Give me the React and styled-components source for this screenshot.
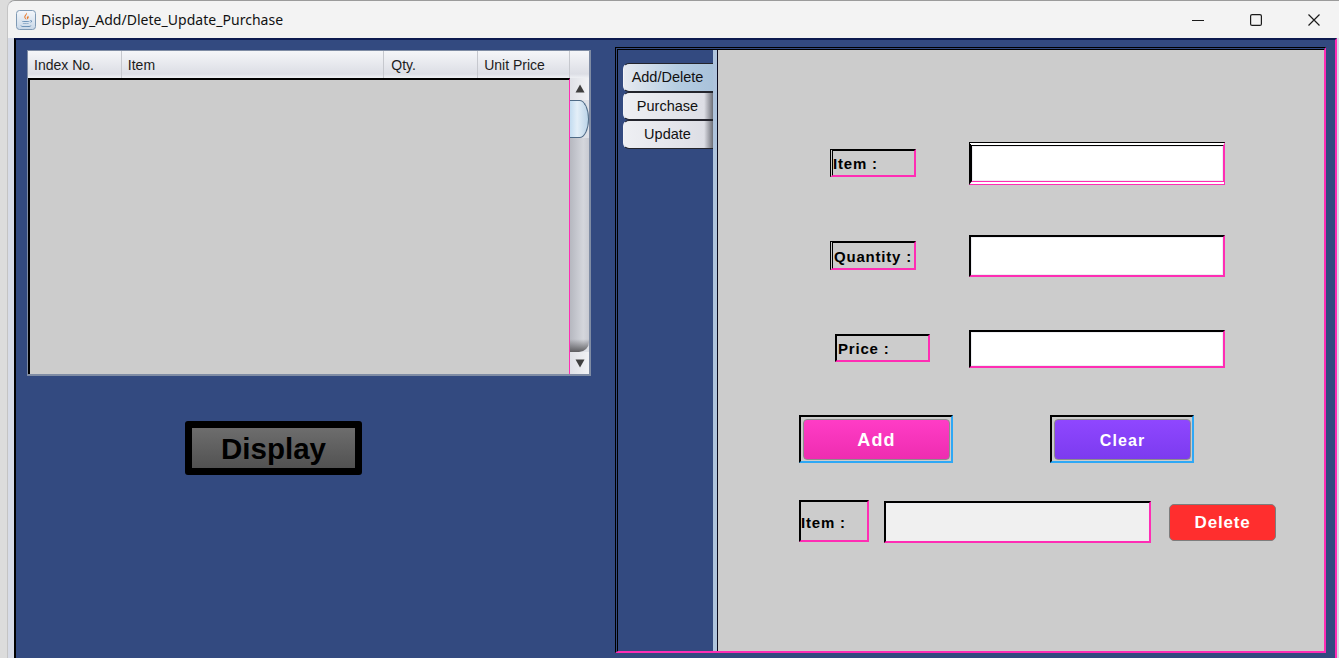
import React from 'react';
import styled, { createGlobalStyle } from 'styled-components';

const PINK = '#ff2db4';
const NAVY = '#334a80';

const Global = createGlobalStyle`
  html, body {
    margin: 0;
    height: 100%;
    overflow: hidden;
    background: #dcdcdc;
  }
`;

const JavaIcon = () => (
  <svg width="20" height="20" viewBox="0 0 20 20">
    <defs>
      <linearGradient id="tile" x1="0" y1="0" x2="0" y2="1">
        <stop offset="0" stopColor="#f4f7fb" />
        <stop offset="1" stopColor="#c9d8e8" />
      </linearGradient>
    </defs>
    <rect x="0.5" y="0.5" width="19" height="19" rx="3" fill="url(#tile)" stroke="#7f9ab5" />
    <path d="M10.5 2.5c1.6 2-1.8 3.2-1 5.2.3.8 1 1.3 1 2-1-.6-2.6-1.6-2.2-3.2.3-1.5 2.2-2.2 2.2-4zM12 5.5c-.2 1-1.3 1.4-1.2 2.4.1.6.5.9.5 1.6.8-.7 1.6-1.4 1.4-2.4-.1-.6-.5-1-.7-1.6z" fill="#e8792b" />
    <path d="M5.5 10.8c2.2.7 6.4.7 8.4 0-.4.6-1 .8-1.4.9-1.8.3-4 .3-5.6 0-.5-.1-1.1-.4-1.4-.9zM6.5 13c1.8.5 5 .5 6.6 0-.4.6-1 .7-1.6.8-1.2.2-2.4.2-3.6 0-.5-.1-1-.3-1.4-.8z" fill="#4f7ca8" />
    <path d="M4.2 15.2c2.4 1.3 8.8 1.3 11.4 0-.8 1.5-3 1.9-5.6 1.9-2.5 0-5-.4-5.8-1.9z" fill="#4f7ca8" />
    <path d="M14 10.5c1.6-.5 2.4.6 1.6 1.5-.4.5-1.2.8-2 1 .8-.5 1.4-.8 1.4-1.4 0-.5-.4-.8-1-1.1z" fill="#4f7ca8" />
  </svg>
);

const Arrow = ({ down }) => (
  <svg width="10" height="10" viewBox="0 0 10 10">
    <path d={down ? 'M0.5 1.5h9L5 9.5z' : 'M5 0.5l4.5 8h-9z'} fill="#3f3f3f" />
  </svg>
);

const ControlIcon = ({ kind }) => (
  <svg width="12" height="12" viewBox="0 0 12 12" fill="none" stroke="#1b1b1b" strokeWidth="1.2">
    {kind === 'min' && <path d="M0 6.5h12" />}
    {kind === 'max' && <rect x="0.6" y="0.6" width="10.8" height="10.8" rx="1.5" />}
    {kind === 'close' && <path d="M0.5 0.5l11 11M11.5 0.5l-11 11" />}
  </svg>
);

const TableSection = () => (
  <TableBox>
    <HeaderRow>
      <HeaderCell $width={94}>Index No.</HeaderCell>
      <HeaderCell $width={263}>Item</HeaderCell>
      <HeaderCell $width={94} $pad={7}>Qty.</HeaderCell>
      <HeaderCell $width={92}>Unit Price</HeaderCell>
      <HeaderCell $width={19} />
    </HeaderRow>
    <TableBody>
      <Rows />
      <Scrollbar>
        <ScrollEnd><Arrow /></ScrollEnd>
        <Thumb />
        <Track />
        <ScrollEnd><Arrow down /></ScrollEnd>
      </Scrollbar>
    </TableBody>
  </TableBox>
);

const App = () => (
  <>
    <Global />
    <Desktop>
      <Window>
        <TitleBar>
          <JavaIcon />
          <Title>Display_Add/Dlete_Update_Purchase</Title>
          <Controls>
            <ControlIcon kind="min" />
            <ControlIcon kind="max" />
            <ControlIcon kind="close" />
          </Controls>
        </TitleBar>
        <Frame>
          <Body>
            <LeftPane>
              <TableSection />
              <DisplayButton>Display</DisplayButton>
            </LeftPane>
            <TabbedPane>
              <TabColumn>
                <Tab $active>Add/Delete</Tab>
                <Tab>Purchase</Tab>
                <Tab>Update</Tab>
              </TabColumn>
              <Divider />
              <Content>
                <FormRow $top={92} $height={43} $left={112}>
                  <Label $width={86} $height={28} $raise={1} $double>Item :</Label>
                  <Field $width={256} $ml={53} $double />
                </FormRow>
                <FormRow $top={50} $height={42} $left={112}>
                  <Label $width={86} $height={29} $raise={1} $double $pad={1} $padTop={2}>Quantity :</Label>
                  <Field $width={256} $ml={53} />
                </FormRow>
                <FormRow $top={53} $height={38} $left={117}>
                  <Label $width={95} $height={28} $raise={2} $pad={1}>Price :</Label>
                  <Field $width={256} $ml={39} />
                </FormRow>
                <FormRow $top={47} $height={48} $left={81}>
                  <ButtonFrame $width={154}>
                    <FormButton $from="#ff3cc6" $to="#ee2db0" $size={18}>Add</FormButton>
                  </ButtonFrame>
                  <ButtonFrame $width={144} $ml={97}>
                    <FormButton $from="#8f47ff" $to="#7c3bef" $size={16}>Clear</FormButton>
                  </ButtonFrame>
                </FormRow>
                <FormRow $top={37} $height={43} $left={81}>
                  <Label $width={70} $height={42} $raise={1} $padTop={3}>Item :</Label>
                  <Field $width={267} $ml={15} $short $disabled />
                  <DeleteButton>Delete</DeleteButton>
                </FormRow>
              </Content>
            </TabbedPane>
          </Body>
        </Frame>
      </Window>
    </Desktop>
  </>
);

// Styled components

const Desktop = styled.div`
  height: 658px;
  padding-left: 7px;
  box-sizing: border-box;
  background: #dcdcdc;
`;

const Window = styled.div`
  height: 100%;
  display: flex;
  flex-direction: column;
  box-sizing: border-box;
  border-top: 1px solid #9b9b9b;
  border-left: 1px solid #c4c4c4;
  border-top-left-radius: 8px;
  overflow: hidden;
  background: #d7dbe6;
`;

const TitleBar = styled.div`
  height: 37px;
  flex-shrink: 0;
  display: flex;
  align-items: center;
  padding-left: 8px;
  box-sizing: border-box;
  background: #f3f3f3;
`;

const Title = styled.div`
  margin-left: 5px;
  font: 14px "Noto Sans", sans-serif;
  letter-spacing: 0.03px;
  color: #111;
`;

const Controls = styled.div`
  margin-left: auto;
  padding-right: 19px;
  display: flex;
  align-items: center;
  gap: 46px;
`;

const Frame = styled.div`
  flex: 1;
  display: flex;
  padding: 0 2px 0 6px;
  min-height: 0;
`;

const Body = styled.div`
  flex: 1;
  display: flex;
  align-items: flex-start;
  box-sizing: border-box;
  border-top: 2px solid #0d1a4f;
  border-left: 2px solid #000;
  border-right: 2px solid ${PINK};
  background: ${NAVY};
`;

const LeftPane = styled.div`
  width: 599px;
  flex-shrink: 0;
  padding: 10px 0 0 11px;
  box-sizing: border-box;
`;

const TableBox = styled.div`
  width: 564px;
  height: 326px;
  display: flex;
  flex-direction: column;
  box-sizing: border-box;
  border: 1px solid #7f8ca4;
  border-right-width: 2px;
  border-bottom-width: 2px;
`;

const HeaderRow = styled.div`
  height: 27px;
  flex-shrink: 0;
  display: flex;
`;

const HeaderCell = styled.div`
  width: ${(p) => p.$width}px;
  box-sizing: border-box;
  padding-left: ${(p) => p.$pad || 6}px;
  border-right: 1px solid #c6c8ce;
  background: linear-gradient(#f5f6f9, #dcdee5 85%, #eef0f4);
  font: 14px/28px "Liberation Sans", sans-serif;
  color: #1c1c1c;
  &:last-child {
    border-right: none;
  }
`;

const TableBody = styled.div`
  flex: 1;
  display: flex;
  min-height: 0;
`;

const Rows = styled.div`
  width: 542px;
  box-sizing: border-box;
  border-top: 2px solid #000;
  border-left: 2px solid #000;
  border-right: 1px solid ${PINK};
  background: #cccccc;
`;

const Scrollbar = styled.div`
  flex: 1;
  display: flex;
  flex-direction: column;
  background: #dfe1e7;
`;

const ScrollEnd = styled.div`
  height: 22px;
  flex-shrink: 0;
  display: flex;
  align-items: center;
  justify-content: center;
  background: linear-gradient(90deg, #dfe1e7, #f1f2f5);
`;

const Thumb = styled.div`
  height: 38px;
  flex-shrink: 0;
  box-sizing: border-box;
  border: 1.5px solid #4f6a86;
  border-left: none;
  border-radius: 0 50% 50% 0 / 0 50% 50% 0;
  background: linear-gradient(90deg, #c3dcf0, #e4eff8 40%, #bcd4e8);
`;

const Track = styled.div`
  flex: 1;
  border-radius: 0 0 10px 0;
  background:
    linear-gradient(transparent 94%, #5d5d60),
    linear-gradient(90deg, #b6b8c0, #d4d6dc 70%, #c8cad2);
`;

const DisplayButton = styled.div`
  width: 177px;
  height: 54px;
  margin: 45px 0 0 158px;
  box-sizing: border-box;
  border: 7px solid #000;
  border-radius: 3px;
  background: linear-gradient(#6d6d6d, #525252);
  font: bold 29.5px/42px "Liberation Sans", sans-serif;
  color: #000;
  text-align: center;
`;

const TabbedPane = styled.div`
  width: 711px;
  height: 606px;
  margin-top: 7px;
  display: flex;
  box-sizing: border-box;
  border-top: 3px double #000;
  border-left: 3px double #000;
  border-right: 2px solid ${PINK};
  border-bottom: 2px solid ${PINK};
`;

const TabColumn = styled.div`
  width: 95px;
  flex-shrink: 0;
  padding: 13px 0 0 5px;
  box-sizing: border-box;
  display: flex;
  flex-direction: column;
  background: ${NAVY};
`;

const Tab = styled.div`
  height: 28.5px;
  padding-right: 2px;
  box-sizing: border-box;
  border-top: 1px solid #23242c;
  border-bottom: 1px solid #23242c;
  border-left: 1px solid #f3f4f7;
  border-radius: 6px 0 0 6px;
  background: ${(p) =>
    p.$active
      ? 'linear-gradient(90deg, #e6e9ef, #b5cde2 60%, #a9c2da)'
      : 'linear-gradient(90deg, #eeeff3, #dddee5 90%, #6d6f78)'};
  font: 14.5px/27px "Liberation Sans", sans-serif;
  color: #111;
  text-align: center;
`;

const Divider = styled.div`
  width: 5px;
  flex-shrink: 0;
  box-sizing: border-box;
  border-right: 1px solid #0a0a1e;
  background: #aec3dc;
`;

const Content = styled.div`
  flex: 1;
  background: #cccccc;
`;

const FormRow = styled.div`
  height: ${(p) => p.$height}px;
  margin-top: ${(p) => p.$top}px;
  padding-left: ${(p) => p.$left}px;
  display: flex;
  align-items: center;
`;

const Label = styled.div`
  width: ${(p) => p.$width}px;
  height: ${(p) => p.$height}px;
  margin-bottom: ${(p) => p.$raise || 0}px;
  box-sizing: border-box;
  padding-left: ${(p) => p.$pad || 0}px;
  padding-top: ${(p) => p.$padTop || 0}px;
  border: 2px solid;
  border-color: #000 ${PINK} ${PINK} #000;
  ${(p) => p.$double && 'border-left: 3px double #000;'}
  display: flex;
  align-items: center;
  font: bold 15px "Liberation Sans", sans-serif;
  letter-spacing: 0.8px;
  white-space: nowrap;
  color: #000;
`;

const Field = styled.div`
  width: ${(p) => p.$width}px;
  height: ${(p) => (p.$short ? '42px' : '100%')};
  margin-left: ${(p) => p.$ml}px;
  ${(p) => p.$short && 'align-self: flex-end;'}
  box-sizing: border-box;
  border: 2px solid;
  ${(p) => p.$double && 'border-width: 4px 2px 4px 3px; border-style: double solid;'}
  border-color: #000 ${PINK} ${PINK} #000;
  box-shadow: inset 0 0 0 1px #eeeef2;
  background: ${(p) => (p.$disabled ? '#f0f0f0' : '#fff')};
`;

const ButtonFrame = styled.div`
  width: ${(p) => p.$width}px;
  height: 48px;
  margin-left: ${(p) => p.$ml || 0}px;
  padding: 2px 1px 1px 2px;
  box-sizing: border-box;
  display: flex;
  border: 2px solid;
  border-color: #000 #2ea8f5 #2ea8f5 #000;
`;

const FormButton = styled.div`
  flex: 1;
  padding-top: 2px;
  box-sizing: border-box;
  border: 1px solid #8c8c8c;
  border-radius: 4px;
  background: linear-gradient(${(p) => p.$from}, ${(p) => p.$to});
  display: flex;
  align-items: center;
  justify-content: center;
  font: bold ${(p) => p.$size}px "Liberation Sans", sans-serif;
  letter-spacing: 1.1px;
  color: #fff;
`;

const DeleteButton = styled.div`
  width: 107px;
  height: 37px;
  margin: 2px 0 0 18px;
  box-sizing: border-box;
  border: 1px solid #7d7d7d;
  border-radius: 5px;
  background: #ff2e2e;
  display: flex;
  align-items: center;
  justify-content: center;
  font: bold 17px "Liberation Sans", sans-serif;
  letter-spacing: 0.8px;
  color: #fff;
`;

export default App;
